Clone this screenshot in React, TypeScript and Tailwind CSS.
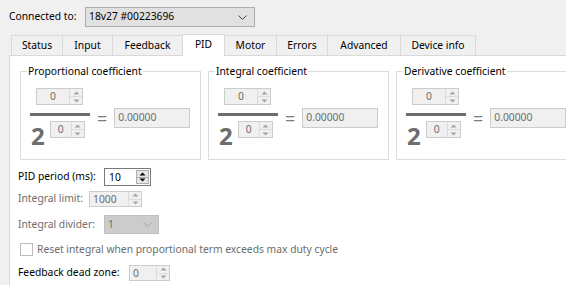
import React from "react";
import clsx from "clsx";

const FONT = "font-['Noto_Sans','Liberation_Sans',sans-serif]";

function Arrows({ enabled }: { enabled?: boolean }) {
  const c = enabled ? "#000000" : "#a3a3a3";
  return (
    <div className="flex flex-col w-[13px] h-full">
      <div
        className={clsx(
          "flex-1 flex items-center justify-center",
          enabled ? "border border-[#adadad] bg-[#e5e5e5]" : "border-l border-[#dcdcdc]",
        )}
      >
        <svg width="7" height="4" viewBox="0 0 7 4">
          <path d="M0.5 3.5 L3.5 0.5 L6.5 3.5 Z" fill={c} />
        </svg>
      </div>
      <div
        className={clsx(
          "flex-1 flex items-center justify-center",
          enabled ? "border border-t-0 border-[#adadad] bg-[#e5e5e5]" : "border-l border-t border-[#dcdcdc]",
        )}
      >
        <svg width="7" height="4" viewBox="0 0 7 4">
          <path d="M0.5 0.5 L3.5 3.5 L6.5 0.5 Z" fill={c} />
        </svg>
      </div>
    </div>
  );
}

function SpinBox({
  value,
  width,
  height = "h-[17px]",
  enabled,
  center,
}: {
  value: string;
  width: string;
  height?: string;
  enabled?: boolean;
  center?: boolean;
}) {
  return (
    <div
      className={clsx(
        "flex items-stretch border shrink-0",
        width,
        height,
        enabled ? "border-[#7a7a7a] bg-white p-[1px]" : "border-[#cccccc] bg-[#f0f0f0]",
      )}
    >
      <div
        className={clsx(
          "flex-1 flex items-center leading-none",
          center ? "justify-center" : "pl-[3px]",
          enabled ? "text-black" : "text-[#6d6d6d]",
        )}
      >
        {value}
      </div>
      <Arrows enabled={enabled} />
    </div>
  );
}

function Coefficient({ title }: { title: string }) {
  return (
    <div className="relative w-[181px] h-[89px] border border-[#dcdcdc] shrink-0">
      <span className="absolute -top-[9px] left-[6px] bg-white px-[1px] leading-[16px] text-black">{title}</span>
      <div className="flex items-center pl-[9px] pt-[16px]">
        <div className="flex flex-col w-[60px]">
          <div className="pl-[6px]">
            <SpinBox value="0" width="w-[47px]" center />
          </div>
          <div className="h-[3px] bg-[#6d6d6d] mt-[8px]" />
          <div className="flex items-start mt-[5px]">
            <span className="text-[24px] font-bold leading-[28px] text-[#6d6d6d] pl-[1px] mt-[1px]">2</span>
            <div className="ml-[5px]">
              <SpinBox value="0" width="w-[35px]" center />
            </div>
          </div>
        </div>
        <span className="ml-[7px] mb-[2px] text-[18px] leading-none text-[#7d7d7d]">=</span>
        <div className="ml-[7px] -mt-[3px] w-[76px] h-[20px] border border-[#cccccc] bg-[#f0f0f0] flex items-center pl-[3px] text-[#6d6d6d]">
          0.00000
        </div>
      </div>
    </div>
  );
}

const TABS = ["Status", "Input", "Feedback", "PID", "Motor", "Errors", "Advanced", "Device info"];
const TAB_W: Record<string, string> = {
  Status: "w-[52px]",
  Input: "w-[50px]",
  Feedback: "w-[70px]",
  PID: "w-[43px]",
  Motor: "w-[52px]",
  Errors: "w-[51px]",
  Advanced: "w-[73px]",
  "Device info": "w-[75px]",
};

export default function App() {
  return (
    <div
      className={clsx(
        "w-[566px] h-[285px] bg-[#f0f0f0] overflow-hidden flex flex-col text-[10.3px] text-black whitespace-nowrap",
        FONT,
      )}
    >
      <div className="flex items-center pl-[9px] pt-[7px] h-[27px] shrink-0">
        <span className="w-[76px]">Connected to:</span>
        <div className="w-[170px] h-[20px] border border-[#adadad] bg-[#e1e1e1] flex items-center pl-[3px] pr-[7px]">
          <span className="flex-1">18v27 #00223696</span>
          <svg width="9" height="5" viewBox="0 0 9 5">
            <path d="M0.5 0.5 L4.5 4.5 L8.5 0.5" fill="none" stroke="#444" strokeWidth="1" />
          </svg>
        </div>
      </div>
      <div className="flex items-end pl-[11px] h-[28px] relative z-10 shrink-0">
        {TABS.map(tab => {
          const selected = tab === "PID";
          return (
            <div
              key={tab}
              className={clsx(
                "flex items-center justify-center border-t border-r border-[#d9d9d9] first:border-l",
                TAB_W[tab],
                selected ? "h-[22px] -mb-px bg-white border-l -ml-px pb-[2px]" : "h-[20px] bg-[#f0f0f0]",
              )}
            >
              {tab}
            </div>
          );
        })}
      </div>
      <div className="flex-1 ml-[9px] border-l border-t border-[#d9d9d9] bg-white">
        <div className="flex gap-[7px] pl-[10px] pt-[15px]">
          <Coefficient title="Proportional coefficient" />
          <Coefficient title="Integral coefficient" />
          <Coefficient title="Derivative coefficient" />
        </div>
        <div className="flex flex-col pl-[8px]">
          <div className="flex items-center h-[18px] mt-[8px]">
            <span className="w-[86px]">PID period (ms):</span>
            <SpinBox value="10" width="w-[47px]" height="h-[18px]" enabled />
          </div>
          <div className="flex items-center h-[16px] mt-[5px] text-[#6d6d6d]">
            <span className="w-[71px]">Integral limit:</span>
            <SpinBox value="1000" width="w-[53px]" height="h-[16px]" />
          </div>
          <div className="flex items-center h-[19px] mt-[8px] text-[#6d6d6d]">
            <span className="w-[86px]">Integral divider:</span>
            <div className="w-[55px] h-[19px] border border-[#bfbfbf] bg-[#cccccc] flex items-center pl-[3px] pr-[6px]">
              <span className="flex-1">1</span>
              <svg width="9" height="5" viewBox="0 0 9 5">
                <path d="M0.5 0.5 L4.5 4.5 L8.5 0.5" fill="none" stroke="#a0a0a0" strokeWidth="1" />
              </svg>
            </div>
          </div>
          <div className="flex items-center h-[13px] mt-[9px] text-[#6d6d6d]">
            <div className="w-[13px] h-[13px] border border-[#bcbcbc] bg-white ml-[2px]" />
            <span className="ml-[4px]">Reset integral when proportional term exceeds max duty cycle</span>
          </div>
          <div className="flex items-center h-[16px] mt-[9px]">
            <span className="w-[111px]">Feedback dead zone:</span>
            <SpinBox value="0" width="w-[41px]" height="h-[16px]" />
          </div>
        </div>
      </div>
    </div>
  );
}
